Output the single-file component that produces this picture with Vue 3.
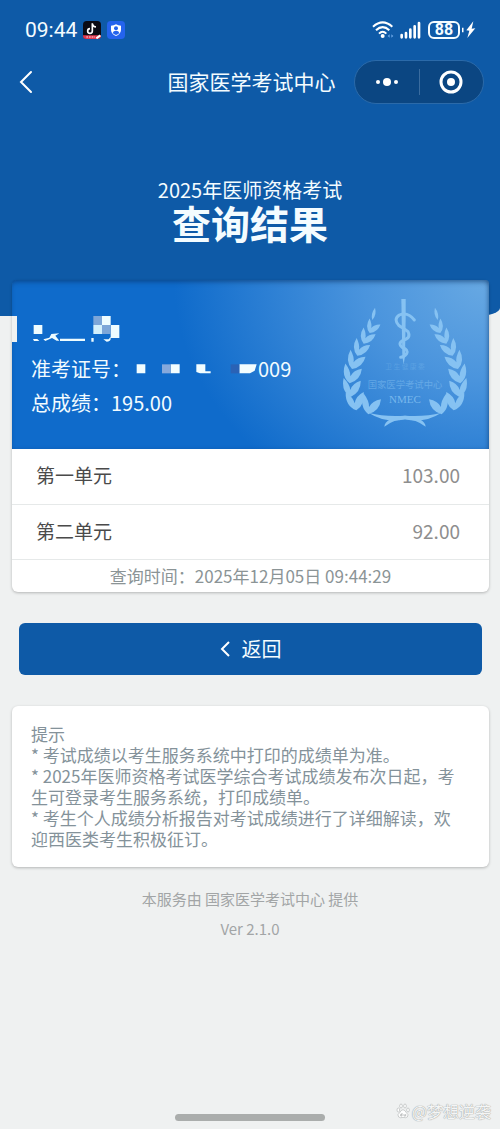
<template>
  <div class="page">
    <header class="header">
      <div class="status">
        <div class="status__left">
          <span class="status__time">09:44</span>
          <svg class="status__app" width="18" height="18" viewBox="0 0 54 54">
            <rect width="54" height="54" rx="11" fill="#0b0b14" />
            <path d="M0 43H54V45Q54 54 44 54H10Q0 54 0 45Z" fill="#e2384f" />
            <path d="M10 48H36" stroke="#f5a9b2" stroke-width="4" stroke-dasharray="5 3" />
            <path d="M40 52L52 43" stroke="#ffffff" stroke-width="6" />
            <path d="M28 7V30A7 7 0 1 1 21 23M28 9Q30 17 39 18" fill="none" stroke="#ffffff" stroke-width="5" />
          </svg>
          <svg class="status__app" width="18" height="18" viewBox="0 0 54 54">
            <rect width="54" height="54" rx="11" fill="#2463ed" />
            <path d="M27 10Q34 14 42 14V27Q41 39 27 45Q13 39 12 27V14Q20 14 27 10Z" fill="#ffffff" />
            <circle cx="27" cy="22" r="6" fill="#2463ed" />
            <path d="M17 36Q19 29 27 29Q35 29 37 36Q33 40 27 42Q21 40 17 36Z" fill="#2463ed" />
          </svg>
        </div>
        <div class="status__right">
          <svg width="22" height="18" viewBox="0 0 66 54">
            <g fill="none" stroke="#ffffff" stroke-width="6">
              <path d="M3 17Q32 -9 61 17" />
              <path d="M12 28Q32 9 52 28" />
              <path d="M21 38Q32 27 43 38" />
            </g>
            <circle cx="32" cy="45" r="6" fill="#ffffff" />
            <path d="M47 45L53 40V50ZM64 45L58 40V50Z" fill="#6aa6e6" />
          </svg>
          <svg width="22" height="18" viewBox="0 0 66 54">
            <path d="M5 49V42M18 49V36M31 49V26M44 49V16M57 49V6" stroke="#ffffff" stroke-width="8" stroke-linecap="round" />
          </svg>
          <span class="battery">88</span>
          <svg class="bolt" width="14" height="18" viewBox="0 0 42 54">
            <path d="M2 20V34" stroke="#ffffff" stroke-width="5" />
            <path d="M34 1L13 28L22 29L16 51L40 22L29 23Z" fill="#ffffff" />
          </svg>
        </div>
      </div>

      <nav class="nav">
        <button class="nav__back" type="button" aria-label="返回">
          <svg width="14" height="24" viewBox="0 0 14 24">
            <path d="M12 2L2 12L12 22" fill="none" stroke="#ffffff" stroke-width="2" stroke-linecap="round" />
          </svg>
        </button>
        <span class="nav__title">国家医学考试中心</span>
        <div class="capsule">
          <button class="capsule__btn" type="button" aria-label="更多">
            <svg width="24" height="10" viewBox="0 0 24 10">
              <circle cx="3" cy="5" r="2" fill="#ffffff" />
              <circle cx="12" cy="5" r="4" fill="#ffffff" />
              <circle cx="21" cy="5" r="2" fill="#ffffff" />
            </svg>
          </button>
          <button class="capsule__btn" type="button" aria-label="关闭">
            <svg width="24" height="24" viewBox="0 0 24 24">
              <circle cx="12" cy="12" r="10" fill="none" stroke="#ffffff" stroke-width="3" />
              <circle cx="12" cy="12" r="4" fill="#ffffff" />
            </svg>
          </button>
        </div>
      </nav>

      <p class="header__sub">2025年医师资格考试</p>
      <h1 class="header__title">查询结果</h1>
    </header>

    <main class="content">
      <section class="card">
        <div class="hero">
          <span class="hero__notch"></span>
          <div class="hero__info">
            <svg class="hero__name" width="90" height="28" viewBox="95 135 270 84">
              <path d="M103 165H129V192H103ZM308 138H334V165H308ZM334 165H360V204H334Z" fill="#eefcff" />
              <path d="M282 138H308V165H282ZM308 165H334V192H308Z" fill="#7da6d8" />
              <path d="M282 165H308V192H282Z" fill="#d3effb" />
              <path d="M101 207H114L120 213H104ZM132 208L150 203L156 192L180 190L168 197L180 212H172L158 204L138 213ZM182 206H257V213H182ZM276 204H283V215H276ZM312 208H328L334 200V208Q332 215 322 215Z" fill="#eefcff" />
            </svg>
            <div class="hero__line">
              <span>准考证号：</span>
              <svg width="127" height="20" viewBox="393 272 381 60">
                <path d="M410 291H436V318H410ZM512 291H539V318H512ZM589 291H616V312H632V318H600L589 314ZM718 291H770L764 310L750 318H718Z" fill="#f2fdff" />
                <path d="M486 291H512V318H486Z" fill="#86a9dc" />
                <path d="M692 291H718V318H692Z" fill="#2a62b5" />
              </svg>
              <span>009</span>
            </div>
            <div class="hero__line">总成绩：195.00</div>
          </div>

          <svg class="emblem" width="126" height="134" viewBox="91 84 378 402">
            <g v-for="side in sides" :key="side" :transform="side">
              <path d="M190 116Q196 137 182 153Q176 135 190 116Z" />
              <path
                v-for="leaf in leaves"
                :key="leaf"
                :transform="leaf"
                d="M0 0Q-22 -17 -12 -47Q1 -31 1 -17Q8 -32 28 -36Q26 -9 0 0Z"
              />
              <path d="M172 432Q220 444 280 440Q340 446 342 473Q312 451 280 451Q222 464 172 432Z" />
            </g>
            <path d="M269 90H282V150L280 262L276 286L272 262Z" />
            <g class="emblem__snake">
              <path d="M308 153Q288 127 263 138Q244 151 262 170Q278 179 289 188Q299 207 275 213Q256 224 273 236Q290 242 285 254Q278 264 267 265" />
            </g>
            <text class="emblem__small" x="280" y="299">卫 生 健 康 委</text>
            <text class="emblem__cn" x="280" y="358">国家医学考试中心</text>
            <text class="emblem__en" x="280" y="403">NMEC</text>
          </svg>
        </div>

        <table class="scores">
          <tbody>
            <tr v-for="item in scores" :key="item.name">
              <th scope="row">{{ item.name }}</th>
              <td>{{ item.score }}</td>
            </tr>
          </tbody>
        </table>
        <p class="card__time">查询时间：2025年12月05日 09:44:29</p>
      </section>

      <button class="back" type="button">
        <svg width="10" height="18" viewBox="0 0 10 18">
          <path d="M9 2L2 9L9 16" fill="none" stroke="#ffffff" stroke-width="2" />
        </svg>
        <span>返回</span>
      </button>

      <section class="tips">
        <p>{{ tips.join("\n") }}</p>
      </section>
    </main>

    <footer class="footer">
      <p>本服务由 国家医学考试中心 提供</p>
      <p>Ver 2.1.0</p>
    </footer>

    <div class="home-bar"></div>
    <div class="watermark">
      <svg width="14" height="16" viewBox="0 0 42 48">
        <g fill="#ffffff" stroke="#b4b6b6" stroke-width="2">
          <ellipse cx="7" cy="21" rx="4" ry="6" />
          <ellipse cx="15" cy="9" rx="4" ry="6" />
          <ellipse cx="27" cy="9" rx="4" ry="6" />
          <ellipse cx="36" cy="21" rx="4" ry="6" />
          <path d="M21 20Q27 21 31 29Q40 35 34 42Q29 46 21 43Q13 46 8 42Q2 35 11 29Q15 21 21 20Z" />
        </g>
        <path d="M18 30V39H14V34H18M24 33V39H29V33" fill="none" stroke="#a5a7a7" stroke-width="2" />
      </svg>
      <span>@梦想逆袭</span>
    </div>
  </div>
</template>

<script setup>
const scores = [
  { name: "第一单元", score: "103.00" },
  { name: "第二单元", score: "92.00" },
];

const tips = [
  "提示",
  "* 考试成绩以考生服务系统中打印的成绩单为准。",
  "* 2025年医师资格考试医学综合考试成绩发布次日起，考生可登录考生服务系统，打印成绩单。",
  "* 考生个人成绩分析报告对考试成绩进行了详细解读，欢迎西医类考生积极征订。",
];

// wreath: the right branch is the left one mirrored
const sides = ["", "translate(560 0) scale(-1 1)"];

const leaves = [
  [174, 192, 14, 0.9],
  [156, 224, 14, 1],
  [137, 260, 12, 1.1],
  [121, 300, 10, 1.2],
  [114, 343, 2, 1.25],
  [117, 384, -6, 1.25],
  [134, 424, -16, 1.3],
  [170, 436, 2, 1.3],
].map(([x, y, angle, size]) => `translate(${x} ${y}) rotate(${angle}) scale(${size})`);
</script>

<style>
body {
  margin: 0;
  background: #eff1f1;
}
</style>

<style scoped>
.page {
  position: relative;
  display: flex;
  flex-direction: column;
  min-height: 100vh;
  background: #eff1f1;
  font-family: "Noto Sans CJK SC", sans-serif;
}

p,
h1 {
  margin: 0;
}

button {
  padding: 0;
  border: none;
  background: none;
  color: inherit;
  font: inherit;
  cursor: pointer;
}

.header {
  box-sizing: border-box;
  padding-bottom: 72px;
  background: #0e5aa7;
  border-bottom-right-radius: 24px 8px;
  color: #f4fcff;
  text-align: center;
}

.status {
  display: flex;
  justify-content: space-between;
  align-items: center;
  height: 60px;
  padding: 0 24px 0 25px;
}

.status__left,
.status__right {
  display: flex;
  align-items: center;
  gap: 6px;
}

.status__time {
  font-family: Roboto, sans-serif;
  font-size: 21px;
}

.battery {
  box-sizing: border-box;
  width: 32px;
  height: 18px;
  border: 2px solid #f4fcff;
  border-radius: 6px;
  font: bold 16px/14px Roboto, sans-serif;
}

.bolt {
  margin-left: -4px;
}

.nav {
  display: grid;
  grid-template-columns: 1fr auto 1fr;
  align-items: center;
  height: 44px;
  padding: 0 16px 0 19px;
}

.nav__back {
  display: flex;
  justify-self: start;
}

.nav__title {
  padding-bottom: 2px;
  font-size: 21px;
  line-height: 30px;
}

.capsule {
  display: flex;
  justify-self: end;
  align-items: center;
  box-sizing: border-box;
  width: 130px;
  height: 44px;
  border: 1px solid #2b6aa9;
  border-radius: 22px;
  background: #0b4682;
}

.capsule__btn {
  display: flex;
  flex: 1;
  justify-content: center;
  align-items: center;
  height: 26px;
}

.capsule__btn + .capsule__btn {
  border-left: 1px solid #3a6c9f;
}

.header__sub {
  margin-top: 72px;
  font-size: 20px;
  line-height: 28px;
}

.header__title {
  font-size: 39px;
  line-height: 36px;
  padding-bottom: 4px;
}

.content {
  display: flex;
  flex-direction: column;
  margin-top: -36px;
  padding: 0 11px 0 12px;
}

.card,
.tips {
  border-radius: 6px;
  background: #ffffff;
  box-shadow: 0 1px 3px rgba(0, 0, 0, 0.25);
}

.hero {
  position: relative;
  display: flex;
  justify-content: space-between;
  box-sizing: border-box;
  height: 169px;
  padding: 17px 21px 0 19px;
  border-radius: 4px 4px 0 0;
  background: radial-gradient(ellipse 66% 150% at 100% 0, #68a9e3 0%, #4a94dd 40%, #0f6bcb 100%);
  box-shadow: inset 0 4px 5px -2px rgba(10, 50, 100, 0.5), inset -2px 0 4px -1px rgba(10, 50, 100, 0.4);
  color: #f2fbff;
}

/* blank strip left by the redaction on the card edge */
.hero__notch {
  position: absolute;
  top: 36px;
  left: 0;
  width: 5px;
  height: 26px;
  background: #eff1f1;
}

.hero__info {
  padding-top: 18px;
}

.hero__name {
  display: block;
  margin-bottom: 8px;
}

.hero__line {
  display: flex;
  align-items: center;
  height: 34px;
  font-size: 20px;
}

.emblem {
  fill: #86c2f2;
}

.emblem__snake {
  fill: none;
  stroke: #86c2f2;
  stroke-width: 9px;
  stroke-linecap: round;
}

.emblem text {
  text-anchor: middle;
}

.emblem__small {
  font-size: 20px;
  opacity: 0.3;
}

.emblem__cn {
  font-size: 28px;
  opacity: 0.5;
}

.emblem__en {
  font-family: "Liberation Serif", serif;
  font-size: 33px;
  opacity: 0.8;
}

.scores {
  width: 100%;
  border-collapse: collapse;
  font-size: 19px;
}

.scores tr {
  height: 55px;
  border-bottom: 1px solid #e6e9e9;
}

.scores th {
  padding: 0 0 3px 24px;
  color: #4a4a4a;
  font-weight: normal;
  text-align: left;
}

.scores td {
  padding: 0 29px 3px 0;
  color: #8e8e8e;
  text-align: right;
}

.card__time {
  color: #8b9496;
  font-size: 17px;
  line-height: 32px;
  text-align: center;
}

.back {
  display: flex;
  justify-content: center;
  align-items: center;
  gap: 12px;
  height: 52px;
  margin: 31px 7px;
  border-radius: 6px;
  background: #0e5aa7;
  color: #f4fcff;
  font-size: 20px;
}

.tips {
  padding: 17px 28px 18px 19px;
  color: #84929a;
  font-size: 17px;
  line-height: 21px;
  white-space: pre-line;
}

.footer {
  padding-top: 17px;
  color: #a2a5a6;
  font-size: 15px;
  line-height: 30px;
  text-align: center;
}

.home-bar {
  width: 30%;
  height: 7px;
  margin: auto auto 8px;
  border-radius: 4px;
  background: #aaadac;
}

.watermark {
  position: absolute;
  right: 9px;
  bottom: 8px;
  display: flex;
  align-items: center;
  gap: 2px;
  color: #f4f5f5;
  font-size: 16px;
  line-height: 20px;
  text-shadow: 0 0 1px #9c9f9f, 0 0 1px #9c9f9f;
}
</style>
